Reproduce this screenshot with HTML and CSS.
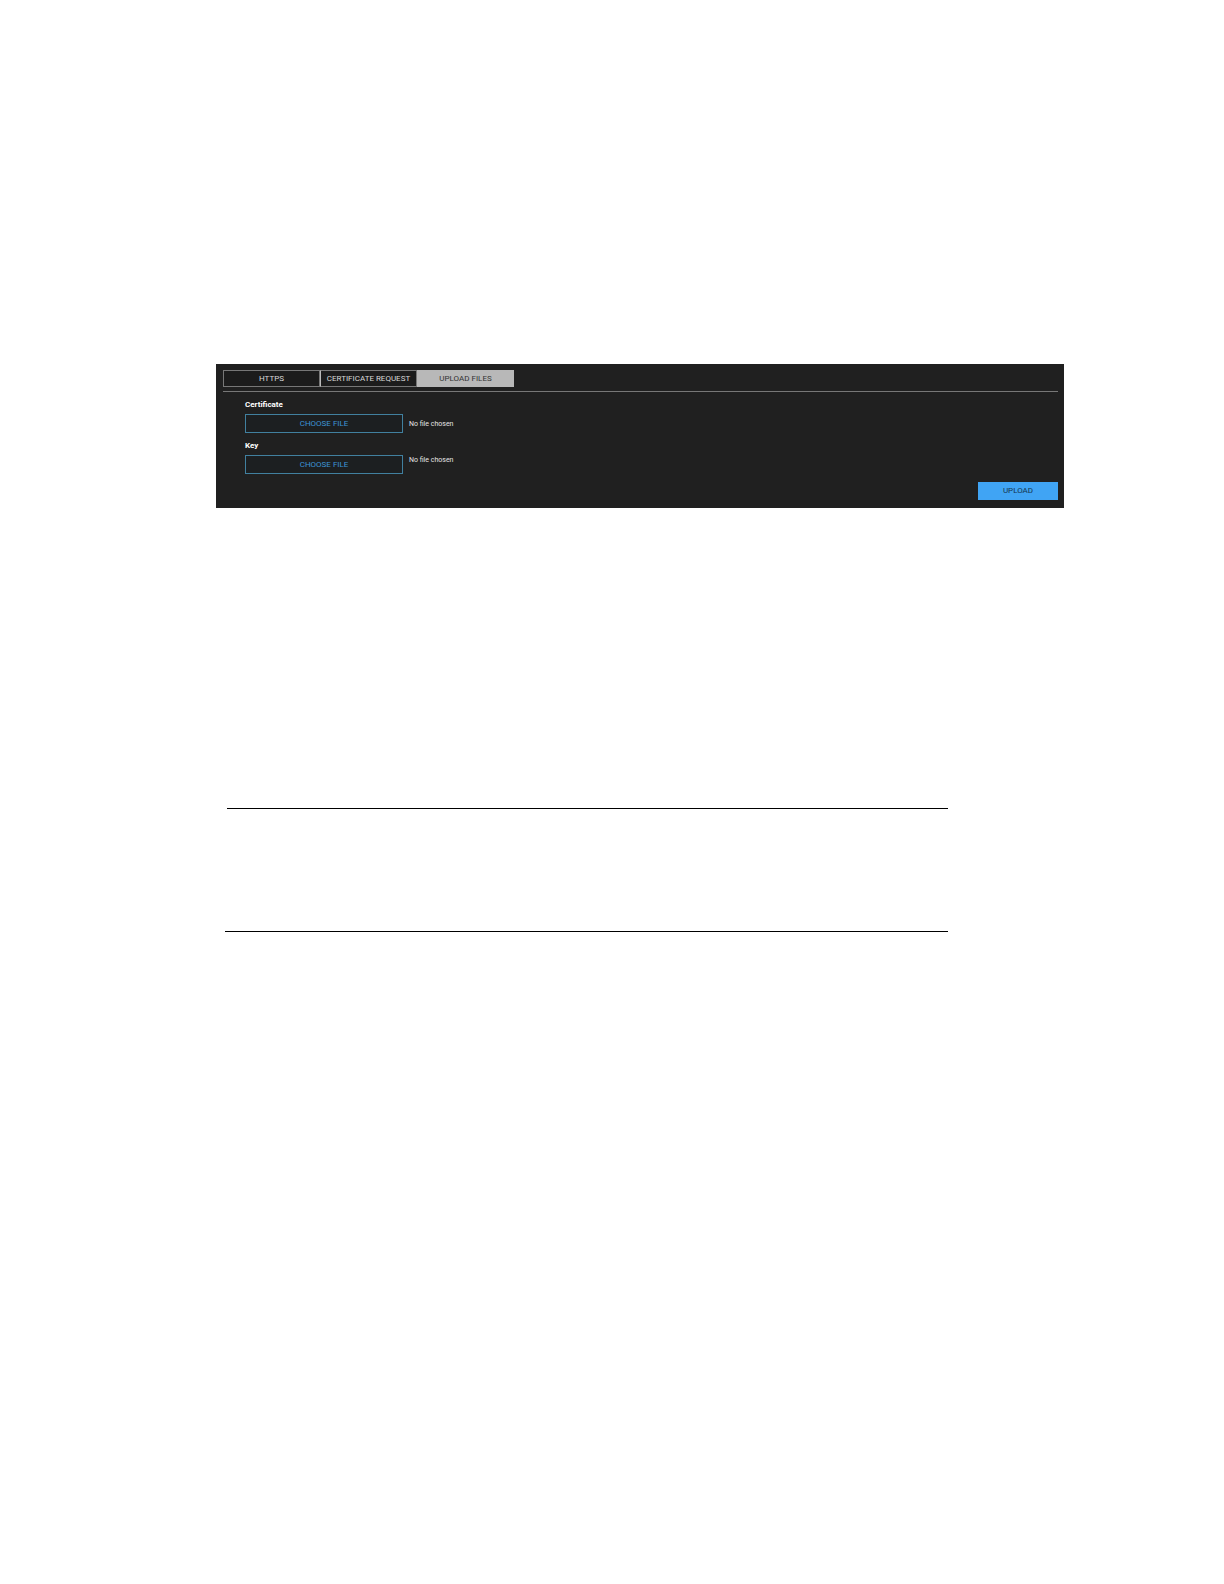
FILE: index.html
```html
<!DOCTYPE html>
<html lang="en">
<head>
<meta charset="utf-8">
<meta name="viewport" content="width=device-width, initial-scale=1">
<title>Upload files</title>
<link rel="stylesheet" href="styles.css">
</head>
<body>
<main class="page">
  <form class="panel">
    <nav class="tabs" aria-label="Certificate settings">
      <button class="tab" type="button">HTTPS</button>
      <button class="tab" type="button">CERTIFICATE REQUEST</button>
      <button class="tab tab-active" type="button" aria-current="page">UPLOAD FILES</button>
    </nav>
    <div class="field">
      <label class="label" for="certificate">Certificate</label>
      <div class="file-row">
        <button class="choose" id="certificate" type="button">CHOOSE FILE</button>
        <span class="status">No file chosen</span>
      </div>
    </div>
    <div class="field">
      <label class="label" for="key">Key</label>
      <div class="file-row file-row-top">
        <button class="choose" id="key" type="button">CHOOSE FILE</button>
        <span class="status">No file chosen</span>
      </div>
    </div>
    <div class="actions">
      <button class="upload" type="submit">UPLOAD</button>
    </div>
  </form>
  <section class="note">
    <hr class="rule rule-top">
    <hr class="rule">
  </section>
</main>
</body>
</html>
```
FILE: styles.css
```css
* {
  box-sizing: border-box;
}

body {
  margin: 0;
  background: #fff;
  font-family: Roboto, "Liberation Sans", sans-serif;
  font-size: 8px;
  line-height: 10px;
}

button {
  margin: 0;
  padding: 0;
  border-radius: 0;
  font: inherit;
  cursor: pointer;
}

.page {
  padding: 364px 160px 64px 216px;
}

.panel {
  padding: 6px 6px 8px 7px;
  background: #202020;
  color: #e4e4e4;
}

.tabs {
  display: flex;
  padding-bottom: 4px;
  border-bottom: 1px solid #777;
}

.tab {
  width: 97px;
  height: 17px;
  border: 1px solid #777;
  background: #1c1c1c;
  color: #d8d8d8;
}

.tab + .tab {
  border-left-color: #bbb;
}

.tab + .tab-active {
  border-color: #b8b8b8;
  background: #b8b8b8;
  color: #333;
}

.field {
  padding: 8px 0 0 22px;
}

.label {
  display: block;
  margin-bottom: 4px;
  color: #fff;
  font-weight: 700;
}

.file-row {
  display: flex;
  align-items: center;
  gap: 6px;
}

.file-row-top {
  align-items: flex-start;
}

.status {
  font-size: 7px;
}

.choose {
  width: 158px;
  height: 19px;
  border: 1px solid #41809f;
  background: #1c1f21;
  color: #3d94d6;
}

.actions {
  display: flex;
  justify-content: flex-end;
  padding-top: 8px;
}

.upload {
  width: 80px;
  height: 18px;
  border: 0;
  background: #40a4f4;
  color: #16354e;
}

.note {
  margin: 300px 116px 0 9px;
}

.rule {
  height: 1px;
  margin: 0;
  border: 0;
  background: #000;
}

.rule-top {
  margin: 0 0 122px 2px;
}
```
